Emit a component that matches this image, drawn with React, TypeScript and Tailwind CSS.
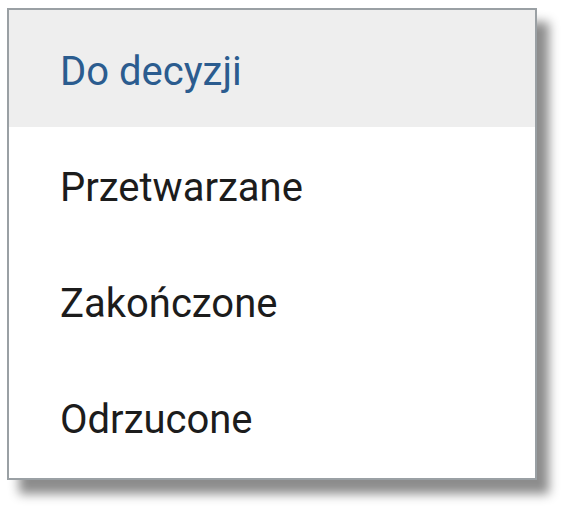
const items = [
  { label: 'Do decyzji', active: true },
  { label: 'Przetwarzane', active: false },
  { label: 'Zakończone', active: false },
  { label: 'Odrzucone', active: false },
];

export default function App() {
  return (
    <div className="w-[577px] h-[531px] bg-white pt-[8px] pl-[7px]" style={{ fontFamily: 'Roboto, "Liberation Sans", sans-serif' }}>
      <div className="w-[530px] pb-[3px] border-2 border-[#9aa0a4] bg-white shadow-[12px_14px_10px_rgba(0,0,0,0.45)]">
        {items.map((item) => (
          <div
            key={item.label}
            className={
              item.active
                ? 'h-[117px] flex items-center pl-[51px] pt-[6px] bg-[#eeeeee] text-[#2b5c8f] text-[40px]'
                : 'h-[116px] flex items-center pl-[51px] pt-[6px] text-[#1c1c1c] text-[40px]'
            }
          >
            {item.label}
          </div>
        ))}
      </div>
    </div>
  );
}
